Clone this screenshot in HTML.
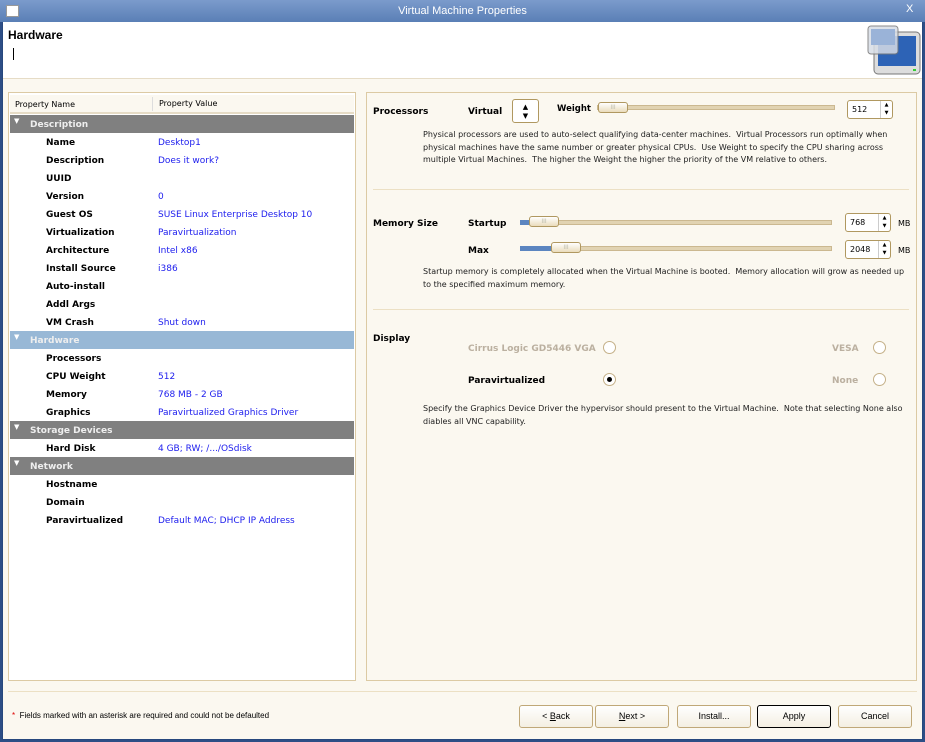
<!DOCTYPE html>
<html><head><style>
*{margin:0;padding:0;box-sizing:border-box}
body{width:925px;height:742px;overflow:hidden;font-family:"DejaVu Sans","Liberation Sans",sans-serif;font-size:9px;background:#2d4e86;position:relative}
.a{position:absolute}
#win{left:2px;top:0;width:921px;height:740px;background:#fbf8f0;border:1px solid #27487d}
#title{left:0;top:0;width:925px;height:22px;background:linear-gradient(#7b9bcc,#5a7fb6);color:#fff;font-size:11px;text-align:center;line-height:22px;font-family:"Liberation Sans",sans-serif}
.row{position:absolute;left:10px;width:344px;height:18px;line-height:20px}
.row b{position:absolute;left:36px;font-weight:bold;color:#000}
.row span{position:absolute;left:148px;color:#2020ee}
.hd{background:#808080;color:#eee;font-weight:bold}
.hd i{position:absolute;left:4px;top:0px;font-style:normal;font-size:7px;line-height:12px;color:#fff}
.hd em{position:absolute;left:20px;font-style:normal}
.btn{position:absolute;top:705px;width:74px;height:23px;border:1px solid #c0a878;border-radius:3px;background:linear-gradient(#fff,#f4efe2);text-align:center;line-height:21px;font-family:"Liberation Sans",sans-serif;font-size:9px}
.lbl{position:absolute;font-weight:bold;font-size:9px}
.txt{position:absolute;left:423px;width:490px;line-height:12.5px;font-size:8px;color:#222}
.track{position:absolute;height:5px;background:#e1d3b2;border:1px solid #cbb890}
.thumb{position:absolute;width:30px;height:11px;border:1px solid #b09860;border-radius:3px;background:linear-gradient(#fff,#eadcbc);text-align:center;font-size:6px;line-height:9px;color:#bba}
.spin{position:absolute;width:46px;height:19px;border:1px solid #b09860;border-radius:3px;background:#fff;font-size:8px;line-height:17px;padding-left:4px}
.spin:after{content:"▲\A▼";white-space:pre;position:absolute;right:0;top:0;width:11px;height:17px;border-left:1px solid #ccc;font-size:5px;line-height:8px;text-align:center}
.radio{position:absolute;width:13px;height:13px;border:1px solid #c4b088;border-radius:50%;background:#fff}
</style></head><body>
<div id="win" class="a"></div>
<div id="title" class="a">Virtual Machine Properties</div>
<div class="a" style="left:6px;top:5px;width:13px;height:12px;background:#fff;border:1px solid #999"></div>
<div class="a" style="left:906px;top:3px;color:#fff;font-size:11px;font-family:'Liberation Sans'">X</div>
<div class="a" style="left:3px;top:22px;width:919px;height:57px;background:#fff;border-bottom:1px solid #e6dcc6"></div>
<div class="a" style="left:8px;top:28px;font-weight:bold;font-size:12px;font-family:'Liberation Sans',sans-serif">Hardware</div>
<div class="a" style="left:13px;top:48px;width:1px;height:12px;background:#000"></div>
<svg class="a" style="left:866px;top:24px" width="56" height="52"><rect x="8" y="8" width="46" height="42" rx="4" fill="#ddd" stroke="#777"/><rect x="12" y="12" width="38" height="30" fill="#2d63b6"/><rect x="2" y="2" width="30" height="28" rx="3" fill="#d8dde6" stroke="#777" opacity=".85"/><rect x="5" y="5" width="24" height="16" fill="#9ab3d8"/><rect x="47" y="45" width="3" height="2" fill="#3c3"/></svg>
<div class="a" style="left:8px;top:92px;width:348px;height:589px;border:1px solid #dccaa4;background:#fff"></div>
<div class="a" style="left:10px;top:95px;width:344px;height:19px;background:#fbf8f0;border-bottom:2px solid #e6dcc6;line-height:19px;font-size:8px"><span class="a" style="left:5px">Property Name</span><span class="a" style="left:142px;border-left:1px solid #ddd;height:14px;top:2px;line-height:14px;padding-left:6px">Property Value</span></div>
<div class="row hd" style="top:115px"><i>▼</i><em>Description</em></div>
<div class="row" style="top:133px"><b>Name</b><span>Desktop1</span></div>
<div class="row" style="top:151px"><b>Description</b><span>Does it work?</span></div>
<div class="row" style="top:169px"><b>UUID</b></div>
<div class="row" style="top:187px"><b>Version</b><span>0</span></div>
<div class="row" style="top:205px"><b>Guest OS</b><span>SUSE Linux Enterprise Desktop 10</span></div>
<div class="row" style="top:223px"><b>Virtualization</b><span>Paravirtualization</span></div>
<div class="row" style="top:241px"><b>Architecture</b><span>Intel x86</span></div>
<div class="row" style="top:259px"><b>Install Source</b><span>i386</span></div>
<div class="row" style="top:277px"><b>Auto-install</b></div>
<div class="row" style="top:295px"><b>Addl Args</b></div>
<div class="row" style="top:313px"><b>VM Crash</b><span>Shut down</span></div>
<div class="row hd" style="top:331px;background:#98b8d6"><i>▼</i><em>Hardware</em></div>
<div class="row" style="top:349px"><b>Processors</b></div>
<div class="row" style="top:367px"><b>CPU Weight</b><span>512</span></div>
<div class="row" style="top:385px"><b>Memory</b><span>768 MB - 2 GB</span></div>
<div class="row" style="top:403px"><b>Graphics</b><span>Paravirtualized Graphics Driver</span></div>
<div class="row hd" style="top:421px"><i>▼</i><em>Storage Devices</em></div>
<div class="row" style="top:439px"><b>Hard Disk</b><span>4 GB; RW; /.../OSdisk</span></div>
<div class="row hd" style="top:457px"><i>▼</i><em>Network</em></div>
<div class="row" style="top:475px"><b>Hostname</b></div>
<div class="row" style="top:493px"><b>Domain</b></div>
<div class="row" style="top:511px"><b>Paravirtualized</b><span>Default MAC; DHCP IP Address</span></div>
<div class="a" style="left:366px;top:92px;width:551px;height:589px;border:1px solid #dccaa4;background:#fbf8f0"></div>
<div class="lbl" style="left:373px;top:107px">Processors</div>
<div class="lbl" style="left:468px;top:107px">Virtual</div>
<div class="a" style="left:512px;top:99px;width:27px;height:24px;border:1px solid #b09860;border-radius:3px;background:#fff;text-align:center;font-size:7px;line-height:9px;padding-top:3px">▲<br>▼</div>
<div class="lbl" style="left:557px;top:104px;font-size:8.5px">Weight</div>
<div class="track" style="left:597px;top:105px;width:238px"></div>
<div class="thumb" style="left:598px;top:102px">III</div>
<div class="spin" style="left:847px;top:100px">512</div>
<div class="txt" style="top:129px">Physical processors are used to auto-select qualifying data-center machines.&nbsp; Virtual Processors run optimally when physical machines have the same number or greater physical CPUs.&nbsp; Use Weight to specify the CPU sharing across multiple Virtual Machines.&nbsp; The higher the Weight the higher the priority of the VM relative to others.</div>
<div class="a" style="left:373px;top:189px;width:536px;height:1px;background:#ece0c4"></div>
<div class="lbl" style="left:373px;top:219px">Memory Size</div>
<div class="lbl" style="left:468px;top:219px">Startup</div>
<div class="track" style="left:520px;top:220px;width:312px"></div>
<div class="a" style="left:520px;top:220px;width:10px;height:5px;background:#5b85c0"></div>
<div class="thumb" style="left:529px;top:216px">III</div>
<div class="spin" style="left:845px;top:213px">768</div>
<div class="a" style="left:898px;top:219px;font-size:8px">MB</div>
<div class="lbl" style="left:468px;top:246px">Max</div>
<div class="track" style="left:520px;top:246px;width:312px"></div>
<div class="a" style="left:520px;top:246px;width:32px;height:5px;background:#5b85c0"></div>
<div class="thumb" style="left:551px;top:242px">III</div>
<div class="spin" style="left:845px;top:240px">2048</div>
<div class="a" style="left:898px;top:246px;font-size:8px">MB</div>
<div class="txt" style="top:266px">Startup memory is completely allocated when the Virtual Machine is booted.&nbsp; Memory allocation will grow as needed up to the specified maximum memory.</div>
<div class="a" style="left:373px;top:309px;width:536px;height:1px;background:#ece0c4"></div>
<div class="lbl" style="left:373px;top:334px">Display</div>
<div class="lbl" style="left:468px;top:344px;color:#bbb0a0">Cirrus Logic GD5446 VGA</div>
<div class="radio" style="left:603px;top:341px"></div>
<div class="lbl" style="left:832px;top:344px;color:#bbb0a0">VESA</div>
<div class="radio" style="left:873px;top:341px"></div>
<div class="lbl" style="left:468px;top:376px">Paravirtualized</div>
<div class="radio" style="left:603px;top:373px"><div class="a" style="left:3px;top:3px;width:5px;height:5px;border-radius:50%;background:#000"></div></div>
<div class="lbl" style="left:832px;top:376px;color:#bbb0a0">None</div>
<div class="radio" style="left:873px;top:373px"></div>
<div class="txt" style="top:403px;left:423px">Specify the Graphics Device Driver the hypervisor should present to the Virtual Machine.&nbsp; Note that selecting None also diables all VNC capability.</div>
<div class="a" style="left:8px;top:691px;width:909px;height:1px;background:#ece0c4"></div>
<div class="a" style="left:12px;top:711px;font-size:8px;font-family:'Liberation Sans',sans-serif"><span style="color:#d00">*</span>&nbsp; Fields marked with an asterisk are required and could not be defaulted</div>
<div class="btn" style="left:519px">&lt; <u>B</u>ack</div>
<div class="btn" style="left:595px"><u>N</u>ext &gt;</div>
<div class="btn" style="left:677px">Install...</div>
<div class="btn" style="left:757px;border:1px solid #000">Apply</div>
<div class="btn" style="left:838px">Cancel</div>
</body></html>
